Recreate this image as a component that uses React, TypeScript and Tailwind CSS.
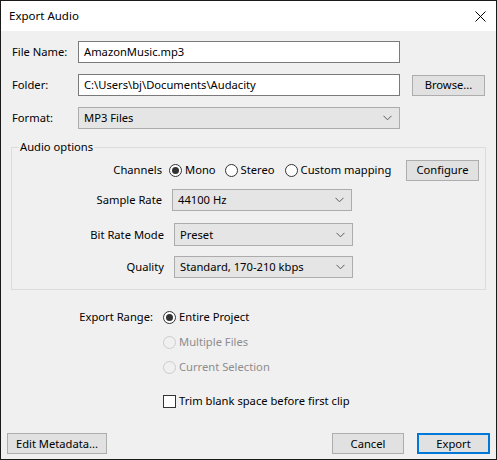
import React from "react";

const font = { fontFamily: '"Noto Sans", "Open Sans", sans-serif' };

function Chevron() {
  return (
    <svg width="9" height="6" viewBox="0 0 9 6" className="shrink-0">
      <path d="M0.5 0.8 L4.5 4.8 L8.5 0.8" fill="none" stroke="#5a5a5a" strokeWidth="1" />
    </svg>
  );
}

function Select({ value, className }: { value: string; className: string }) {
  return (
    <div
      className={
        "h-[22px] bg-[#e5e5e5] border border-[#acacac] flex items-center justify-between pl-[5px] pr-[7px] " +
        className
      }
    >
      <span>{value}</span>
      <Chevron />
    </div>
  );
}

function Radio({ checked, disabled, label }: { checked?: boolean; disabled?: boolean; label: string }) {
  return (
    <div className="flex items-center">
      <div
        className={
          "w-[13px] h-[13px] rounded-full border flex items-center justify-center shrink-0 " +
          (disabled ? "border-[#cccccc] bg-[#f0f0f0]" : "border-[#333333] bg-white")
        }
      >
        {checked && <div className="w-[7px] h-[7px] rounded-full bg-[#333333]" />}
      </div>
      <span className={"ml-[3px] whitespace-nowrap " + (disabled ? "text-[#8d8d8d]" : "")}>{label}</span>
    </div>
  );
}

function Button({ label, className }: { label: string; className: string }) {
  return (
    <div
      className={
        "h-[21px] bg-[#e1e1e1] border border-[#adadad] flex items-center justify-center shrink-0 " + className
      }
    >
      {label}
    </div>
  );
}

export default function App() {
  return (
    <div
      className="w-[497px] h-[460px] border border-[#1a1a1a] bg-[#f0f0f0] flex flex-col text-[11.2px] text-black leading-[16px]"
      style={font}
    >
      {/* title bar */}
      <div className="h-[30px] bg-white flex items-center justify-between pl-[8px] pr-[10px] shrink-0">
        <span className="text-[11.5px]">Export Audio</span>
        <svg width="11" height="11" viewBox="0 0 11 11">
          <path d="M0.5 0.5 L10.5 10.5 M10.5 0.5 L0.5 10.5" stroke="#000" strokeWidth="1" />
        </svg>
      </div>

      {/* top rows */}
      <div className="flex flex-col pl-[11px] pt-[10px]">
        <div className="flex items-center h-[22px]">
          <span className="w-[66px]">File Name:</span>
          <div className="w-[322px] h-[22px] bg-white border border-[#7a7a7a] flex items-center pl-[5px]">
            AmazonMusic.mp3
          </div>
        </div>
        <div className="flex items-center h-[22px] mt-[11px]">
          <span className="w-[66px]">Folder:</span>
          <div className="w-[322px] h-[22px] bg-white border border-[#7a7a7a] flex items-center pl-[5px]">
            C:\Users\bj\Documents\Audacity
          </div>
          <Button label="Browse..." className="w-[73px] h-[20px] ml-[12px]" />
        </div>
        <div className="flex items-center h-[22px] mt-[11px]">
          <span className="w-[66px]">Format:</span>
          <Select value="MP3 Files" className="w-[322px]" />
        </div>
      </div>

      {/* audio options group */}
      <fieldset className="mx-[10px] mt-[10px] border border-[#dcdcdc] h-[151px] pb-[10px]">
        <legend className="ml-[7px] px-[1px]">Audio options</legend>
        <div className="flex items-center h-[20px] mt-[5px]">
          <span className="w-[150px] text-right">Channels</span>
          <div className="flex items-center ml-[7px] w-[237px]">
            <Radio checked label="Mono" />
            <div className="ml-[9px]">
              <Radio label="Stereo" />
            </div>
            <div className="ml-[10px]">
              <Radio label="Custom mapping" />
            </div>
          </div>
          <Button label="Configure" className="w-[73px] h-[20px]" />
        </div>
        <div className="flex items-center h-[22px] mt-[9px]">
          <span className="w-[150px] text-right">Sample Rate</span>
          <Select value="44100 Hz" className="w-[180px] ml-[10px]" />
        </div>
        <div className="flex items-center h-[23px] mt-[12px]">
          <span className="w-[152px] text-right">Bit Rate Mode</span>
          <Select value="Preset" className="w-[179px] ml-[10px] h-[23px]" />
        </div>
        <div className="flex items-center h-[22px] mt-[10px]">
          <span className="w-[152px] text-right">Quality</span>
          <Select value="Standard, 170-210 kbps" className="w-[179px] ml-[10px]" />
        </div>
      </fieldset>

      {/* export range */}
      <div className="flex flex-col mt-[19px]">
        <div className="flex items-center h-[16px]">
          <span className="w-[152px] text-right">Export Range:</span>
          <div className="ml-[10px]">
            <Radio checked label="Entire Project" />
          </div>
        </div>
        <div className="flex items-center h-[16px] mt-[9px] pl-[162px]">
          <Radio disabled label="Multiple Files" />
        </div>
        <div className="flex items-center h-[16px] mt-[9px] pl-[162px]">
          <Radio disabled label="Current Selection" />
        </div>
        <div className="flex items-center h-[16px] mt-[18px] pl-[162px]">
          <div className="w-[13px] h-[13px] border border-[#333333] bg-white" />
          <span className="ml-[3px]">Trim blank space before first clip</span>
        </div>
      </div>

      <div className="flex-1" />

      {/* bottom buttons */}
      <div className="flex items-center pl-[6px] pr-[6px] mb-[5px]">
        <Button label="Edit Metadata..." className="w-[100px]" />
        <div className="flex-1" />
        <Button label="Cancel" className="w-[72px]" />
        <div className="h-[21px] border-2 border-[#0078d7] bg-[#e1e1e1] flex items-center justify-center ml-[13px] w-[73px]">
          Export
        </div>
      </div>
    </div>
  );
}
